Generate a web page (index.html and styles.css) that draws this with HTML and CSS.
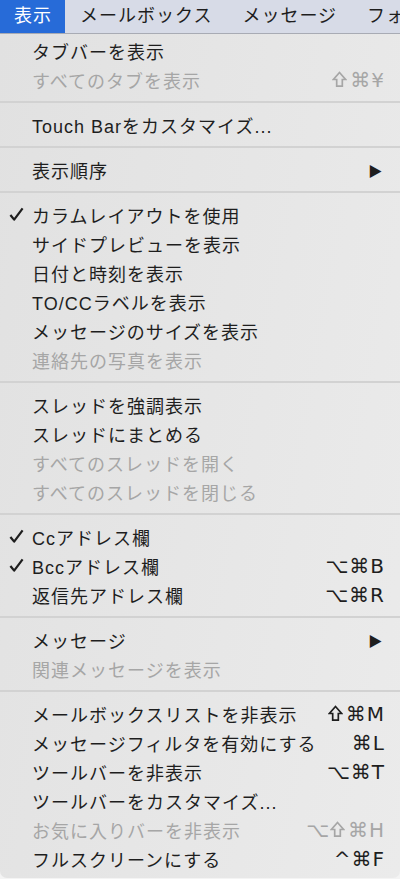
FILE: index.html
```html
<!DOCTYPE html>
<html lang="ja">
<head>
<meta charset="utf-8">
<link rel="stylesheet" href="styles.css">
</head>
<body>
<div class="menubar">
  <span class="mb-item active">表示</span>
  <span class="mb-item">メールボックス</span>
  <span class="mb-item">メッセージ</span>
  <span class="mb-item">フォーマット</span>
</div>
<div class="menu">
  <div class="item"><span class="check"></span><span class="label">タブバーを表示</span></div>
  <div class="item dis"><span class="check"></span><span class="label">すべてのタブを表示</span><span class="key"><svg class="shift" viewBox="0 0 16 18" width="15" height="17"><path d="M8 1.5 L14.5 9 L11 9 L11 16 L5 16 L5 9 L1.5 9 Z" fill="none" stroke="currentColor" stroke-width="1.8" stroke-linejoin="miter"/></svg>⌘¥</span></div>
  <div class="sep"></div>
  <div class="item"><span class="check"></span><span class="label">Touch Barをカスタマイズ...</span></div>
  <div class="sep"></div>
  <div class="item"><span class="check"></span><span class="label">表示順序</span><span class="arrow">▶</span></div>
  <div class="sep"></div>
  <div class="item"><span class="check"><svg viewBox="0 0 16 16" width="15" height="15"><path d="M1.5 8.5 L5.5 13.5 L14.5 1.5" fill="none" stroke="#1e1e1e" stroke-width="2.4" stroke-linejoin="round"/></svg></span><span class="label">カラムレイアウトを使用</span></div>
  <div class="item"><span class="check"></span><span class="label">サイドプレビューを表示</span></div>
  <div class="item"><span class="check"></span><span class="label">日付と時刻を表示</span></div>
  <div class="item"><span class="check"></span><span class="label">TO/CCラベルを表示</span></div>
  <div class="item"><span class="check"></span><span class="label">メッセージのサイズを表示</span></div>
  <div class="item dis"><span class="check"></span><span class="label">連絡先の写真を表示</span></div>
  <div class="sep"></div>
  <div class="item"><span class="check"></span><span class="label">スレッドを強調表示</span></div>
  <div class="item"><span class="check"></span><span class="label">スレッドにまとめる</span></div>
  <div class="item dis"><span class="check"></span><span class="label">すべてのスレッドを開く</span></div>
  <div class="item dis"><span class="check"></span><span class="label">すべてのスレッドを閉じる</span></div>
  <div class="sep"></div>
  <div class="item"><span class="check"><svg viewBox="0 0 16 16" width="15" height="15"><path d="M1.5 8.5 L5.5 13.5 L14.5 1.5" fill="none" stroke="#1e1e1e" stroke-width="2.4" stroke-linejoin="round"/></svg></span><span class="label">Ccアドレス欄</span></div>
  <div class="item"><span class="check"><svg viewBox="0 0 16 16" width="15" height="15"><path d="M1.5 8.5 L5.5 13.5 L14.5 1.5" fill="none" stroke="#1e1e1e" stroke-width="2.4" stroke-linejoin="round"/></svg></span><span class="label">Bccアドレス欄</span><span class="key">⌥⌘B</span></div>
  <div class="item"><span class="check"></span><span class="label">返信先アドレス欄</span><span class="key">⌥⌘R</span></div>
  <div class="sep"></div>
  <div class="item"><span class="check"></span><span class="label">メッセージ</span><span class="arrow">▶</span></div>
  <div class="item dis"><span class="check"></span><span class="label">関連メッセージを表示</span></div>
  <div class="sep"></div>
  <div class="item"><span class="check"></span><span class="label">メールボックスリストを非表示</span><span class="key"><svg class="shift" viewBox="0 0 16 18" width="15" height="17"><path d="M8 1.5 L14.5 9 L11 9 L11 16 L5 16 L5 9 L1.5 9 Z" fill="none" stroke="currentColor" stroke-width="1.8" stroke-linejoin="miter"/></svg>⌘M</span></div>
  <div class="item"><span class="check"></span><span class="label">メッセージフィルタを有効にする</span><span class="key">⌘L</span></div>
  <div class="item"><span class="check"></span><span class="label">ツールバーを非表示</span><span class="key">⌥⌘T</span></div>
  <div class="item"><span class="check"></span><span class="label">ツールバーをカスタマイズ...</span></div>
  <div class="item dis"><span class="check"></span><span class="label">お気に入りバーを非表示</span><span class="key">⌥<svg class="shift" viewBox="0 0 16 18" width="15" height="17"><path d="M8 1.5 L14.5 9 L11 9 L11 16 L5 16 L5 9 L1.5 9 Z" fill="none" stroke="currentColor" stroke-width="1.8" stroke-linejoin="miter"/></svg>⌘H</span></div>
  <div class="item"><span class="check"></span><span class="label">フルスクリーンにする</span><span class="key">^⌘F</span></div>
</div>
</body>
</html>
```
FILE: styles.css
```css
html, body {
  margin: 0;
  padding: 0;
  background: #f4f4f4;
}
body {
  width: 400px;
  height: 879px;
  overflow: hidden;
  font-family: "Liberation Sans", "Noto Sans CJK JP", sans-serif;
  color: #1e1e1e;
}
.menubar {
  height: 33px;
  background: #d7dbe7;
  border-bottom: 1px solid #a8abb4;
  display: flex;
  align-items: center;
  white-space: nowrap;
  overflow: hidden;
  font-size: 18px;
  letter-spacing: 1px;
}
.mb-item {
  height: 33px;
  line-height: 33px;
  padding: 0 15px;
  flex: none;
}
.mb-item.active {
  background: #276bd8;
  color: #fff;
  padding: 0 13px 0 14px;
}
.menu {
  background: linear-gradient(100deg, #e1e1e1 0%, #e6e6e6 50%, #ebebeb 100%);
  padding: 2px 0 5px 0;
  border-radius: 0 0 7px 7px;
  font-size: 18px;
  letter-spacing: 1px;
}
.item {
  height: 29px;
  display: flex;
  align-items: center;
  padding-right: 15px;
  white-space: nowrap;
}
.check {
  width: 32px;
  flex: none;
  display: flex;
  justify-content: flex-start;
  padding-left: 9px;
  box-sizing: border-box;
}
.check svg {
  display: block;
}
.label {
  flex: 1;
}
.key {
  display: flex;
  align-items: center;
  font-family: "DejaVu Sans", "Liberation Sans", sans-serif;
  font-size: 20px;
  letter-spacing: 1px;
}
.shift {
  display: block;
  margin-right: 3px;
}
.arrow {
  font-family: "DejaVu Sans", sans-serif;
  font-size: 17px;
  margin-right: 2px;
  transform: scaleX(0.9);
}
.dis {
  color: #a6a6a6;
}
.sep {
  height: 16px;
  display: flex;
  align-items: center;
}
.sep::before {
  content: "";
  display: block;
  width: 100%;
  height: 2px;
  background: #d2d2d2;
}
```
